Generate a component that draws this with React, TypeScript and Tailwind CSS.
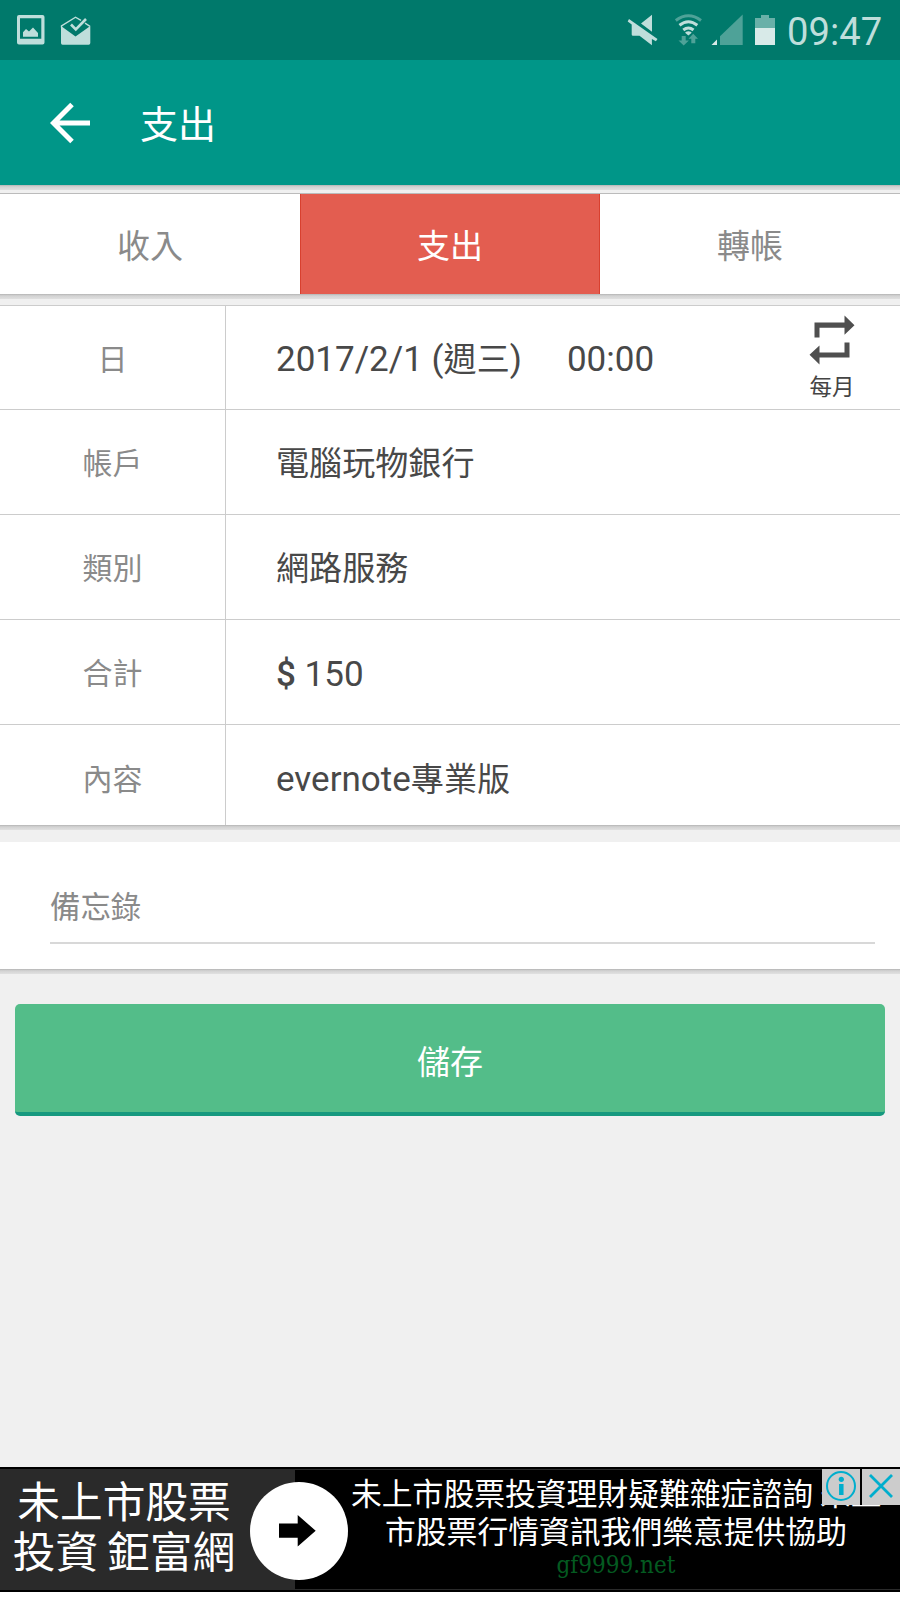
import React from 'react';

type Row = { label: string; value: React.ReactNode };

// Latin glyphs run slightly larger than the CJK ones
const Latin: React.FC<{ children: React.ReactNode }> = ({ children }) => (
  <span className="text-[35px] whitespace-pre">{children}</span>
);

const rows: Row[] = [
  {
    label: '日',
    value: (
      <>
        <Latin>2017/2/1 (</Latin>週三<Latin>)</Latin>
        <span className="ml-[45px]"><Latin>00:00</Latin></span>
      </>
    ),
  },
  { label: '帳戶', value: '電腦玩物銀行' },
  { label: '類別', value: '網路服務' },
  { label: '合計', value: <Latin><span className="font-medium">$</span> 150</Latin> },
  { label: '內容', value: <><Latin>evernote</Latin>專業版</> },
];

const tabs = ['收入', '支出', '轉帳'];

const Shadow: React.FC = () => (
  <div className="h-[5px] shrink-0 bg-linear-to-b from-[#b4b4b4] via-[#d2d2d2] via-35% to-[#e0e0e0]" />
);

const StatusBar: React.FC = () => (
  <div className="h-[60px] shrink-0 bg-[#00796b] flex items-center text-[#bfdedb]">
    <svg className="ml-4 w-[30px] h-[60px]" viewBox="16 0 30 60">
      <path fill="currentColor" fillRule="evenodd" d="M19 15h23.500q2 0 2 2v25.500q0 2-2 2H19q-2 0-2-2V17q0-2 2-2zM20 18.200v20.600h21.300V18.200z" />
      <path fill="currentColor" d="M23 36.800v-4.500l3-3.300 3 2.600 4-4 5 5.400v3.800z" />
    </svg>
    <svg className="ml-[14px] w-[32px] h-[60px]" viewBox="60 0 32 60">
      <path fill="currentColor" d="M61 26l14.500 10.500L90.300 26v17q0 1.700-1.600 1.700H62.500Q61 44.700 61 43z" />
      <path fill="none" stroke="currentColor" strokeWidth="1.400" d="M61.500 27.500V26L75.500 17.200l5.500 3.200M85 23.200l5 3.200" />
      <path fill="none" stroke="currentColor" strokeWidth="2.600" d="M71 24.500l4.800 5L86 19" />
    </svg>

    <svg className="ml-[534px] w-[32px] h-[60px]" viewBox="626 0 32 60">
      <path fill="currentColor" d="M652 14.700v17l-11-8.200zM629 19l28.500 20-1.600 2.300-4-2.400v6.300l-12.400-9.500H633q-1.300 0-1.300-1.300V24.500l-4-2.900z" />
    </svg>
    <svg className="ml-[16px] w-[30px] h-[60px]" viewBox="674 0 30 60" fill="none">
      <path stroke="#4ea298" strokeWidth="3" d="M675.800 20.500q12.600-9.500 25.200 0" />
      <path stroke="currentColor" strokeWidth="3" d="M679.500 25.200q8.900-7 17.800 0M683.300 30q5.100-4 10.200 0" />
      <path fill="currentColor" d="M688.400 31.200q3 0 3.300 1.600l-3.300 2.700-3.300-2.700q.3-1.600 3.300-1.600z" />
      <path fill="#4ea298" d="M681.700 36h4v4.500h3.200l-5.200 5-5.200-5h3.200zM691.300 43.300h4v-4.600h2.700l-4.800-5-4.700 5h2.800z" />
    </svg>
    <svg className="ml-[6px] w-[34px] h-[60px]" viewBox="710 0 34 60">
      <path fill="#4ea298" d="M720 36.200L742.700 14.500V45H720z" />
      <path fill="#d8eae8" d="M717 39.500V45h-5.500z" />
    </svg>
    <svg className="ml-[10px] w-[22px] h-[60px]" viewBox="754 0 22 60">
      <path fill="#69b0a8" d="M755 18h6v-3h8v3h6v10h-20z" />
      <path fill="#d8eae8" d="M755 28h20v17h-20z" />
    </svg>
    <span className="ml-[11px] mt-[4px] text-[38.200px] leading-none">09:47</span>
  </div>
);

const RepeatButton: React.FC = () => (
  <button className="absolute right-0 top-0 w-[136px] h-full flex flex-col items-center">
    <svg className="mt-[9px] w-[46px] h-[50px]" viewBox="0 0 46 50" fill="#4f4f4f">
      <path d="M5.500 22.500V7.500h30V0.500l10 9.700-10 9.500v-7h-25v9.800zM40.500 27.500v15h-30v7L0.500 39.800 10.500 30.500v7h25V27.500z" />
    </svg>
    <span className="mt-2 text-[22.500px] leading-[28px] text-[#444]">每月</span>
  </button>
);

const Ad: React.FC = () => (
  <div className="relative h-[125px] mb-2 shrink-0 bg-[#2a2a2a] border-y-2 border-black flex overflow-hidden text-white">
    <div className="w-[295px] pt-[9px] pr-[47px] text-center text-[42.700px] leading-[50px] whitespace-nowrap">
      <p>未上市股票</p>
      <p>投資<span className="inline-block w-[9px]" />鉅富網</p>
    </div>
    <div className="flex-1 my-px bg-black pl-[26px] text-center text-[30.800px] leading-[38px] whitespace-nowrap">
      <p className="pt-[6px] ml-[30px] text-left">未上市股票投資理財疑難雜症諮詢<span className="inline-block w-[7px]" />未上</p>
      <p className="pl-[11px]">市股票行情資訊我們樂意提供協助</p>
      <p className="pl-[11px] font-['DejaVu_Serif_Condensed','DejaVu_Serif',serif] [font-stretch:condensed] text-[24px] leading-[26px] text-[#045a20]">gf9999.net</p>
    </div>

    <svg className="absolute left-[249px] top-[12px] w-[100px] h-[102px]" viewBox="249 1481 100 102">
      <circle cx="299" cy="1531" r="49" fill="#fff" />
      <path d="M279 1523.500h18.700V1515l18 15.800-18 15.700v-8.700H279z" />
    </svg>

    <div className="absolute right-0 -top-[2px] h-[38px] flex bg-black gap-[2px]">
      <svg className="w-[38px] h-[38px] bg-[#ccc]" viewBox="0 0 38 38" fill="none" stroke="#00aecd">
        <circle cx="19" cy="19" r="14" strokeWidth="2" />
        <circle cx="19.300" cy="12.300" r="2.600" fill="#00aecd" stroke="none" />
        <path strokeWidth="4.500" d="M19.300 17v11" />
      </svg>
      <svg className="w-[38px] h-[38px] bg-[#ccc]" viewBox="0 0 38 38" stroke="#00aecd" strokeWidth="2.800">
        <path d="M8 8l22 22M30 8L8 30" />
      </svg>
    </div>
  </div>
);

const App: React.FC = () => {
  return (
    <div className="w-[900px] h-[1600px] bg-white overflow-hidden font-[Roboto,'Noto_Sans_CJK_TC',sans-serif]">
      <div className="flex flex-col h-full">
        <StatusBar />

        {/* App bar */}
        <header className="h-[125px] shrink-0 bg-[#009688] flex items-center text-white">
          <svg className="ml-[50px] w-[40px] h-[42px]" viewBox="0 0 40 42" fill="none" stroke="#fff" strokeWidth="5">
            <path d="M40 21H4M22 2.500L3.500 21 22 39.500" />
          </svg>
          <h1 className="ml-[50px] pt-[5px] text-[38px] leading-none">支出</h1>
        </header>

        <main className="flex-1 flex flex-col bg-[#f0f0f0]">
          <Shadow />
          <div className="h-1 shrink-0 border-b border-[#bbb]" />

          {/* Tabs */}
          <div className="h-[100px] shrink-0 grid grid-cols-3 bg-white text-[33px] leading-none text-[#8a8a8a]">
            {tabs.map((tab) => (
              <button
                key={tab}
                className={`pt-[4px] ${tab === '支出' ? 'bg-[#e35d50] border-x border-[#d8402f] text-white' : ''}`}
              >
                {tab}
              </button>
            ))}
          </div>
          <Shadow />

          {/* Form */}
          <div className="mt-[6px] h-[520px] shrink-0 bg-white">
            {rows.map((row, i) => (
              <div
                key={row.label}
                className={`relative flex border-t border-[#ccc] ${i === 0 ? 'h-[104px]' : i === 4 ? 'h-[101px]' : 'h-[105px]'}`}
              >
                <div className={`w-[226px] border-r border-[#ccc] flex items-center justify-center text-[30px] leading-none text-[#8a8a8a] ${i === 4 ? 'pt-[9px]' : 'pt-[4px]'}`}>
                  {row.label}
                </div>
                <div className={`flex-1 pl-[50px] flex items-center leading-none text-[33.100px] text-[#484848] ${i === 4 ? 'pt-[9px]' : 'pt-[4px]'}`}>
                  <div>{row.value}</div>
                </div>
                {i === 0 && <RepeatButton />}
              </div>
            ))}
          </div>
          <Shadow />

          {/* Memo */}
          <div className="mt-3 h-[127px] shrink-0 bg-white pl-[50px] pr-[25px]">
            <div className="h-[102px] pt-[51px] border-b-2 border-[#d8d8d8] text-[30.400px] leading-none text-[#8a8a8a]">備忘錄</div>
          </div>
          <Shadow />

          <button className="mx-[15px] mt-[30px] pt-[8px] h-[112px] shrink-0 rounded-[5px] border-b-4 border-[#16997f] bg-[#53bd89] text-[33px] leading-none text-white">
            儲存
          </button>
        </main>

        <Ad />
      </div>
    </div>
  );
};

export default App;
